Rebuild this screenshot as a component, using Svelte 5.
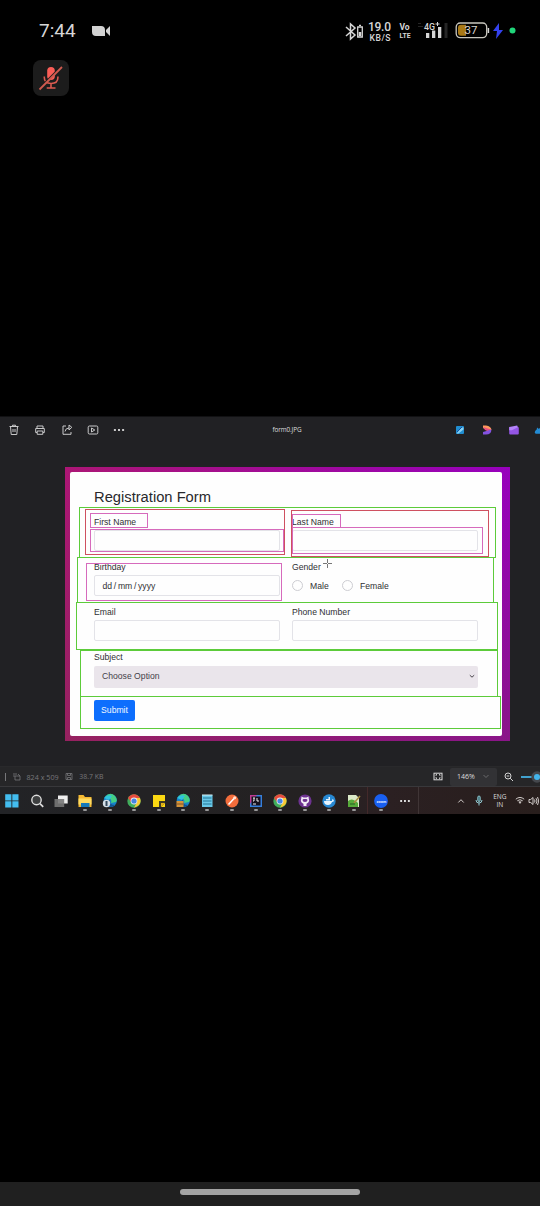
<script>
  const apps = ['windows', 'search', 'tasks', 'folder', 'edge', 'chrome', 'sticky', 'edge2', 'notepad', 'postman', 'intellij', 'chrome', 'github', 'docker', 'npp'];
  const running = (i) => i > 2;
  const marks = [
    { c: 'green', x: 79, y: 507, w: 417, h: 51 },
    { c: 'green', x: 77, y: 557, w: 417, h: 46 },
    { c: 'green', x: 76, y: 602, w: 422, h: 48 },
    { c: 'green', x: 80, y: 650, w: 418, h: 47 },
    { c: 'green', x: 80, y: 696, w: 421, h: 33 },
    { c: 'red', x: 85, y: 509, w: 200, h: 46 },
    { c: 'red', x: 291, y: 510, w: 198, h: 47 },
    { c: 'pink', x: 90, y: 513, w: 58, h: 15 },
    { c: 'pink', x: 90, y: 529, w: 194, h: 23 },
    { c: 'pink', x: 292, y: 514, w: 49, h: 14 },
    { c: 'pink', x: 292, y: 527, w: 191, h: 27 },
    { c: 'pink', x: 86, y: 563, w: 196, h: 38 }
  ];
</script>

<div class="phone">
  <header class="status">
    <span class="time">7:44</span>
    <svg class="cam" width="19" height="12" viewBox="0 0 19 12"><path fill="#d2d2d2" d="M0 1h9q4 0 4 4v6H4q-4 0-4-4zM14 5l4-4v10l-4-4z" /></svg>
    <svg class="signals" width="175" height="24" viewBox="0 0 175 24" fill="none" stroke="#d6d6d6">
      <path stroke-width="1.5" d="M1 8l9 8-4.5 4V5L10 9l-9 8" />
      <path stroke-width="1.3" d="M12.7 8h4.6v10h-4.6zM14 6.4h2" />
      <path stroke-width="2.6" d="M15 13v4" />
      <g fill="#d6d6d6" stroke="none" font-family="Roboto, sans-serif" font-weight="500">
        <text x="23" y="12" font-size="12" textLength="23">19.0</text>
        <text x="24.5" y="21.500" font-size="8.600" textLength="21">KB/S</text>
        <text x="54.5" y="11" font-size="8.5" font-weight="700" textLength="10">Vo</text>
        <text x="54.5" y="19.300" font-size="8" font-weight="700" textLength="11" lengthAdjust="spacingAndGlyphs">LTE</text>
        <text x="79" y="10.5" font-size="9.4" textLength="11" lengthAdjust="spacingAndGlyphs">4G</text>
        <path d="M81 14h3.3v5H81zM87 11.5h3.3V19H87zM93 8h3.3v11H93zM90.5 4.5h4v1h-4zM92 3h1v4h-1z" />
        <path fill="#252525" d="M99.5 4h3v15h-3zM73 4h3v1h-3zM73 7h5v1h-5z" />
      </g>
      <rect x="111.2" y="4" width="30.5" height="14.6" rx="4" stroke="#c9c7bf" stroke-width="1.3" />
      <path d="M143.4 9v5" stroke-width="1.5" />
      <path fill="#a97916" stroke="none" d="M116 5.8h5v11h-5q-3 0-3-3v-5q0-3 3-3z" />
      <text x="119.500" y="15.4" font-family="Roboto, sans-serif" font-size="11.5" fill="#d8d5ce" stroke="none" textLength="13">37</text>
      <path fill="#3442ef" stroke="none" d="M154 4l-6 8h4l-1 8 7-9h-4z" />
      <circle cx="167.5" cy="11.5" r="3" fill="#20d57a" stroke="none" />
    </svg>
  </header>

  <div class="call">
    <div class="mute">
      <svg width="26" height="26" viewBox="0 0 26 26" fill="none" stroke="#dc5a50" stroke-width="1.6">
        <rect x="9.2" y="2" width="7.600" height="13" rx="3.8" fill="#fa5d57" stroke="none" />
        <path d="M6.3 11.5v1q0 6 6.8 6t6.8-6v-1M13 18.5v4M8.7 23h8.8" />
        <path stroke="#1c1c1c" stroke-width="1.500" d="M2.600 22L24 .4" /><path stroke="#cf5b50" stroke-width="1.8" d="M1.5 24.5L24 2" />
      </svg>
    </div>
  </div>

  <main class="viewer">
    <div class="toolbar">
      <div class="tools">
        <svg viewBox="0 0 12 12"><path d="M1.5 2.5h9M4.5 2.3V1.2h3v1.1M2.5 2.5l.7 8h5.6l.7-8M5 5v3M7 5v3" /></svg>
        <svg viewBox="0 0 12 12"><path d="M3 4V2h6v2M3 8.5H1.7v-4h8.6v4H9M3.2 7h5.6v3.3H3.2z" /></svg>
        <svg viewBox="0 0 12 12"><path d="M5 2H2v8.3h8V8M4 7.5q.5-3.5 4-3.5V6l2.8-2.7L8 1v3" /></svg>
        <svg viewBox="0 0 12 12"><rect x="1.2" y="2" width="9.6" height="8" rx="1.2" /><path d="M4.500 4v4L7.8 6z" /></svg>
        <svg viewBox="0 0 12 12"><path stroke-width="2" d="M.9 6h2M5 6h2M9.1 6h2" /></svg>
      </div>
      <span class="file">form0.JPG</span>
      <div class="links">
        <svg viewBox="0 0 12 12"><rect x="2" y="2" width="8" height="8" rx="1" fill="#218ed1" /><path d="M2.500 9.500l5-6h2v2l-5 4z" fill="#88d1f2" /><path d="M3 8l5-5" stroke="#1550a0" /></svg>
        <svg viewBox="0 0 12 12"><path fill="#ff995b" d="M2 1.5h3Q10 2 10.5 6L7 7 2 4z" /><path fill="#e65084" d="M2 3l8 2.5Q9.5 7 7 7.3L4 6z" /><path fill="#8352e0" d="M2 10.5V8l8.4-2.5q0 5-5.4 5z" /></svg>
        <svg viewBox="0 0 12 12"><rect x="1.2" y="3" width="9.6" height="7.5" rx="1" fill="#9355e4" /><path fill="#b483fa" d="M1.2 3l8-1.5.7 1.7-6 3H1.2z" /></svg>
        <svg viewBox="0 0 12 12"><path fill="#238bd3" d="M4 9.8Q1.500 9 4 6q1 0 1-2.500L7 5q2-3 5-1v5.800z" /></svg>
      </div>
    </div>

    <div class="stage">
      <div class="frame">
        <form class="card">
          <h1>Registration Form</h1>
          <div class="grid">
            <div class="field"><span>First Name</span><div class="input"></div></div>
            <div class="field"><span>Last Name</span><div class="input"></div></div>
            <div class="field"><span>Birthday</span><div class="input date">dd / mm / yyyy</div></div>
            <div class="field"><span>Gender</span>
              <div class="radios"><i></i><b>Male</b><i></i><b>Female</b></div>
            </div>
            <div class="field"><span>Email</span><div class="input"></div></div>
            <div class="field"><span>Phone Number</span><div class="input"></div></div>
            <div class="field wide"><span>Subject</span>
              <div class="select">Choose Option
                <svg width="6" height="5" viewBox="0 0 6 5"><path d="M.8 1.200L3 3.200l2.200-2" fill="none" stroke="#4a454c" stroke-width="1" /></svg>
              </div>
            </div>
          </div>
          <button type="button">Submit</button>
        </form>
      </div>
    </div>

    <div class="info">
      <i class="bar"></i>
      <svg class="size" width="9" height="9" viewBox="0 0 9 9"><path d="M1 2h4M1 4h2M3 4h5v4H3zM6 2l2 2" /></svg>
      <span class="dim">824 x 509</span>
      <svg class="disk" width="8" height="9" viewBox="0 0 8 9"><path d="M1 1.5h6v6H1zM2.5 1.5v2h3v-2M2.5 7.5v-2h3v2" /></svg>
      <span class="kb">38.7 KB</span>
      <svg class="fit" width="10" height="9" viewBox="0 0 10 9"><rect x="1" y="1.2" width="8" height="6.6" /><path d="M3 5.3v1h1M7 3.7v-1H6M3 3.7v-1h1M7 5.3v1H6" /></svg>
      <div class="zoom">146%<svg width="6" height="5" viewBox="0 0 6 5"><path d="M.5 1L3 3.500 5.500 1" /></svg></div>
      <svg class="minus" width="10" height="10" viewBox="0 0 10 10"><circle cx="4" cy="4" r="3" /><path d="M6.2 6.2L9 9M2.7 4h2.6" /></svg>
      <svg class="slider" width="19" height="12" viewBox="0 0 19 12"><path d="M0 6h12" stroke="#45afe0" stroke-width="1.8" /><circle cx="16" cy="6" r="5.7" fill="#45484d" stroke="none" /><circle cx="16" cy="6" r="3" fill="#43b5ec" stroke="none" /></svg>
    </div>

    <div class="marks">
      {#each marks as m}
        <i class={m.c} style="left:{m.x}px;top:{m.y - 416}px;width:{m.w}px;height:{m.h}px"></i>
      {/each}
      <svg class="cross" width="10" height="10" viewBox="0 0 10 10"><path d="M4.500 0v4M4.500 5v4M0 4.500h4M5 4.500h4" stroke="#777" fill="none" /></svg>
    </div>
  </main>

  <footer class="taskbar">
    {#each apps as app, i}
      <div class="app">
        <svg width="16" height="16" viewBox="0 0 16 16">
          {#if app === 'windows'}
            <path fill="#43bdf0" d="M1.2 1.2h6.2v6.2H1.2zM8.3 1.2h6.2v6.2H8.3zM1.2 8.3h6.2v6.2H1.2zM8.3 8.3h6.2v6.2H8.3z" />
          {:else if app === 'search'}
            <circle cx="7.5" cy="7" r="4.7" fill="#3d3f40" stroke="#ddd" stroke-width="1.4" /><path d="M11 10.6l3.2 3.3" stroke="#ddd" stroke-width="1.7" />
          {:else if app === 'tasks'}
            <path fill="#eee" d="M5 2.5h9.7v8H5z" /><path fill="#777" d="M1.5 6h9.7v8H1.5z" opacity=".9" />
          {:else if app === 'folder'}
            <path fill="#f5b932" d="M1.5 2h5l1.5 2h6.5v10h-13z" /><path fill="#ffdb61" d="M1.5 5.5h13v6h-13z" /><path fill="#1679b9" d="M4 10h8.5v4H4z" />
          {:else if app === 'edge' || app === 'edge2'}
            <circle cx="8.3" cy="7.5" r="6.6" fill="#1683c9" /><path fill="#45cf85" d="M3 4Q8-2 13 3q3 4 1 6l-5 1q2-5-6-6z" /><path fill="#2fc4df" d="M2 5q4-4 8-2l-3 4z" /><path fill="#145390" d="M8 7q-1 5 5 5-4 4-8 0-1-3 3-5z" />
            {#if app === 'edge'}<circle cx="4.5" cy="10.5" r="3.7" fill="#d4dee7" /><path fill="#34495c" d="M3.5 8h2v5h-2z" />{:else}<path fill="#d6943a" d="M1.5 8h7v6h-7z" /><path fill="#7a552d" d="M1.5 10.5h7v1h-7z" />{/if}
          {:else if app === 'chrome'}
            <circle cx="8" cy="8" r="6.7" fill="#40ad5c" /><path fill="#e64b3d" d="M2 5Q4.500 1.300 8 1.300T14 5H8L5 9z" /><path fill="#fac934" d="M8 5h6q2.500 7-6 9.700L11 9z" /><circle cx="8" cy="8" r="3.400" fill="#eee" /><circle cx="8" cy="8" r="2.600" fill="#4685e4" />
          {:else if app === 'sticky'}
            <path fill="#fbd812" d="M2 2h12v12H2z" /><path fill="#3e3c24" d="M8 8h6v2l-4 4H8z" /><path fill="#e4b417" d="M10 10h4l-4 4z" />
          {:else if app === 'notepad'}
            <path fill="#69c8e8" d="M3 2h10.500v12H3z" /><path d="M4 5h8.500M4 8h8.500M4 11h8.500" stroke="#257797" /><path d="M3 2h10.500" stroke="#d6eef2" />
          {:else if app === 'postman'}
            <circle cx="8" cy="8" r="6.500" fill="#f36d3c" /><path d="M4.500 11.500l6-6.500" stroke="#fff" stroke-width="1.600" /><circle cx="10.700" cy="4.700" r="1.500" fill="#ffe2d4" />
          {:else if app === 'intellij'}
            <path fill="#bd3b91" d="M2 2h8L8 9 2 12z" /><path fill="#367fdc" d="M9 2h5v12H2v-3z" /><path fill="#15111d" d="M3.500 3.500h9v9h-9z" /><path d="M5 5h2M6 5v3H5M9 5v3h2M5 11h3" fill="none" stroke="#eee" />
          {:else if app === 'github'}
            <circle cx="8" cy="8" r="6.600" fill="#6d3290" /><path fill="#f2eaf5" d="M4.500 3.500l2 .9h3l2-.9.3 2.200q1.200 3.300-2 4.800l-.3.5v2h-3v-2q-.2-.4-.5-.5-3-1.500-1.800-4.800z" /><path fill="#6d3290" d="M5.500 7q.2-1 1.500-1h2q1.300 0 1.500 1 0 2-2.500 2T5.500 7z" />
          {:else if app === 'docker'}
            <circle cx="8" cy="8" r="6.700" fill="#2788d2" /><path fill="#e8f5ff" d="M3 8h8q0-2 1-2 1 2 1 2-1 1-2 1-1 3-4 3-4 0-4-4zM5 6h4v1.500H5zM7.500 4H9v2H7.500z" />
          {:else}
            <path fill="#dbe9c7" d="M2 2h8l3 3v9H2z" /><path fill="#57aa3a" d="M2 8q4-4 10 2v4H2z" /><path d="M8 10l6-7" stroke="#a88d41" stroke-width="1.500" /><path d="M4 11h5" stroke="#245f20" />
          {/if}
        </svg>
        <i class:run={running(i)}></i>
      </div>
    {/each}
    <div class="app zoomapp">
      <svg width="16" height="16" viewBox="0 0 16 16"><circle cx="8" cy="8" r="6.900" fill="#195ff0" /><text x="3.500" y="9.500" fill="#e1e9ff" font-family="Inter, sans-serif" font-size="3.600" font-weight="700">zoom</text></svg>
      <i class="run"></i>
    </div>
    <div class="app more"><svg width="10" height="4" viewBox="0 0 10 4"><path d="M.2 2h1.900M4 2h1.900M7.900 2h1.900" stroke="#ddd" stroke-width="1.800" /></svg></div>
    <div class="tray">
      <svg class="up" width="8" height="6" viewBox="0 0 8 6"><path d="M1.300 4.500L4 1.700l2.700 2.800" /></svg>
      <svg class="voice" width="8" height="11" viewBox="0 0 8 11"><rect x="2.700" y="1" width="2.600" height="5.500" rx="1.300" fill="#497b84" stroke="#93cbd3" stroke-width=".8" /><path d="M1 5q0 3 3 3t3-3M4 8v2.500" stroke="#93cbd3" /></svg>
      <span>ENG<br />IN</span>
      <svg class="wifi" width="10" height="9" viewBox="0 0 10 9"><path d="M.8 3.200Q5-.3 9.200 3.200M2.300 4.800q2.700-2.200 5.400 0" /><path fill="#d1cbc9" stroke="none" d="M3.400 5.800q1.600-1 3.200 0L5 8z" /></svg>
      <svg class="vol" width="11" height="10" viewBox="0 0 11 10"><path d="M1 3.500h1.700L5 1.500v7L2.700 6.500H1zM6.500 3.500q1 1.500 0 3M8 2.200q2 2.800 0 5.600M9.500 1q2.500 4 0 8" /></svg>
    </div>
  </footer>

  <div class="spacer"></div>
  <div class="nav"><i></i></div>
</div>

<style>
  :global(body) { margin: 0; background: #000; }
  .phone { width: 540px; height: 1206px; overflow: hidden; background: #000; display: flex; flex-direction: column; font-family: "Liberation Sans", Arial, sans-serif; }
  .phone *, .phone { box-sizing: border-box; }
  svg { display: block; flex: none; }
  i, b { font-style: normal; font-weight: 400; }
  .status { height: 60px; display: flex; align-items: center; padding: 2px 19px 0 39px; }
  .time { width: 53px; font: 19px/22px Roboto, sans-serif; color: #d6d6d6; white-space: nowrap; }
  .signals { margin-left: auto; margin-right: 1px; }
  .call { height: 356px; padding-left: 33px; }
  .mute { width: 36px; height: 36px; border-radius: 8px; background: #1c1c1c; display: grid; place-items: center; }

  .viewer { position: relative; height: 371px; background: #212124; display: flex; flex-direction: column; border-top: 1px solid #111113; flex: none; }
  .toolbar { height: 50px; display: flex; align-items: flex-start; padding: 7px 0 0 7.500px; flex: none; overflow: hidden; }
  .tools { display: flex; gap: 14.5px; width: 265px; flex: none; }
  .tools svg { width: 12px; height: 12px; fill: none; stroke: #c9c9ca; stroke-width: 1; }
  .tools svg:last-child { margin-left: -1px; }
  .file { width: 181.500px; flex: none; font: 6.4px/12px "Open Sans", sans-serif; letter-spacing: -.13px; color: #dedede; }
  .links { display: flex; gap: 14.600px; flex: none; }
  .links svg { width: 12px; height: 12px; }
  .links svg:last-child { margin-left: -2px; }
  .links svg:first-child { margin-right: .5px; }
  .stage { height: 299px; padding-left: 65px; }
  .frame { width: 445px; height: 274px; padding: 5px 8px 5px 5px; background: linear-gradient(to bottom, transparent, rgba(120, 50, 65, .42)), linear-gradient(90deg, #ac1675, #9700bd); }
  .card { display: flex; flex-direction: column; align-items: flex-start; height: 264px; background: #fefefe; border-radius: 2px; padding-left: 24px; }
  h1 { margin: 0; height: 40px; padding-top: 15.500px; font-weight: 400; font-size: 14.720px; line-height: 18px; color: #29292c; }
  .grid { display: grid; grid-template-columns: 185.500px 185.500px; column-gap: 12.500px; grid-auto-rows: 45.200px; }
  .field span { display: block; height: 18px; font-size: 8.650px; line-height: 20.500px; color: #303034; }
  .wide { grid-column: span 2; }
  .wide span { line-height: 19px; }
  .input { height: 21px; border: 1px solid #e3e3e8; border-radius: 2px; padding-left: 7.500px; font-size: 8.650px; line-height: 20px; color: #303034; }
  .date { word-spacing: -.7px; }
  .radios { height: 21px; display: flex; align-items: center; font-size: 8.650px; color: #303034; }
  .radios i { width: 11px; height: 11px; border: 1px solid #cdcdd2; border-radius: 50%; margin-right: 7px; }
  .radios b { width: 32px; }
  .select { height: 22px; border-radius: 2px; background: #eae5eb; padding: 0 3px 1px 8px; display: flex; align-items: center; justify-content: space-between; font-size: 8.650px; line-height: 10px; color: #45424a; }
  button { margin-top: 7px; width: 41px; height: 21px; border: 0; border-radius: 2px; background: #0d6efd; color: #f2f7ff; padding: 0; font: 8.650px "Liberation Sans", sans-serif; }
  .info { height: 21px; display: flex; align-items: center; padding-left: 5px; font: 7px/12px "Open Sans", sans-serif; color: #77777a; border-top: 1px solid #29292b; background: #262628; border-bottom: 1px solid #38383b; }
  .info svg { fill: none; stroke: #77777a; stroke-width: .8; }
  .bar { width: 1px; height: 8px; background: #77777a; margin-right: 6px; }
  .size { margin-right: 5.500px; }
  .dim { width: 39px; white-space: nowrap; font-size: 7.200px; }
  .disk { margin-right: 6px; }
  .kb { width: 355px; font-size: 6.900px; }
  .info .fit { stroke: #ddd; stroke-width: 1; }
  .zoom { width: 47px; height: 18px; margin: 0 7px 0 7px; padding: 0 8px 0 7px; border-radius: 2px; background: #323235; color: #ddd; display: flex; align-items: center; justify-content: space-between; font-size: 7px; }
  .info .minus { stroke: #d5d5d5; margin-right: 7px; stroke-width: 1; }
  .marks { position: absolute; inset: -1px 0 0; pointer-events: none; }
  .marks i { position: absolute; border: 1px solid; }
  .marks .green { border-color: #5ccb3a; }
  .marks .red { border-color: #cf5060; }
  .marks .pink { border-color: #d66abc; }
  .cross { position: absolute; left: 323px; top: 143px; }

  .taskbar { height: 27px; flex: none; display: flex; background: linear-gradient(90deg, #222326, #242122 55%, #2b2022 72%, #281e1c); }
  .app { width: 24.400px; display: flex; flex-direction: column; align-items: center; padding-top: 6px; flex: none; }
  .app i { width: 4px; height: 2px; border-radius: 1px; }
  .app .run { background: #99999a; }
  .zoomapp { width: 26.500px; margin-left: 1px; border-left: 1px solid #43292a; }
  .more { width: 24.500px; padding: 12px 2px 0 0; }
  .tray { flex: 1; border-left: 1px solid #403536; display: flex; align-items: center; color: #ddd; }
  .tray svg { fill: none; stroke: #d1cbc9; stroke-width: 1; }
  .up { margin-left: 38px; }
  .voice { margin-left: 10px; }
  .tray span { width: 18px; margin: 0 6.500px 0 8px; text-align: center; font: 6.600px/8px "Open Sans", sans-serif; }
  .vol { margin-left: 3px; }
  .spacer { flex: 1; }
  .nav { height: 24px; background: #202020; display: flex; justify-content: center; padding-top: 7px; }
  .nav i { width: 180px; height: 6px; border-radius: 3px; background: #a3a3a3; }
</style>
